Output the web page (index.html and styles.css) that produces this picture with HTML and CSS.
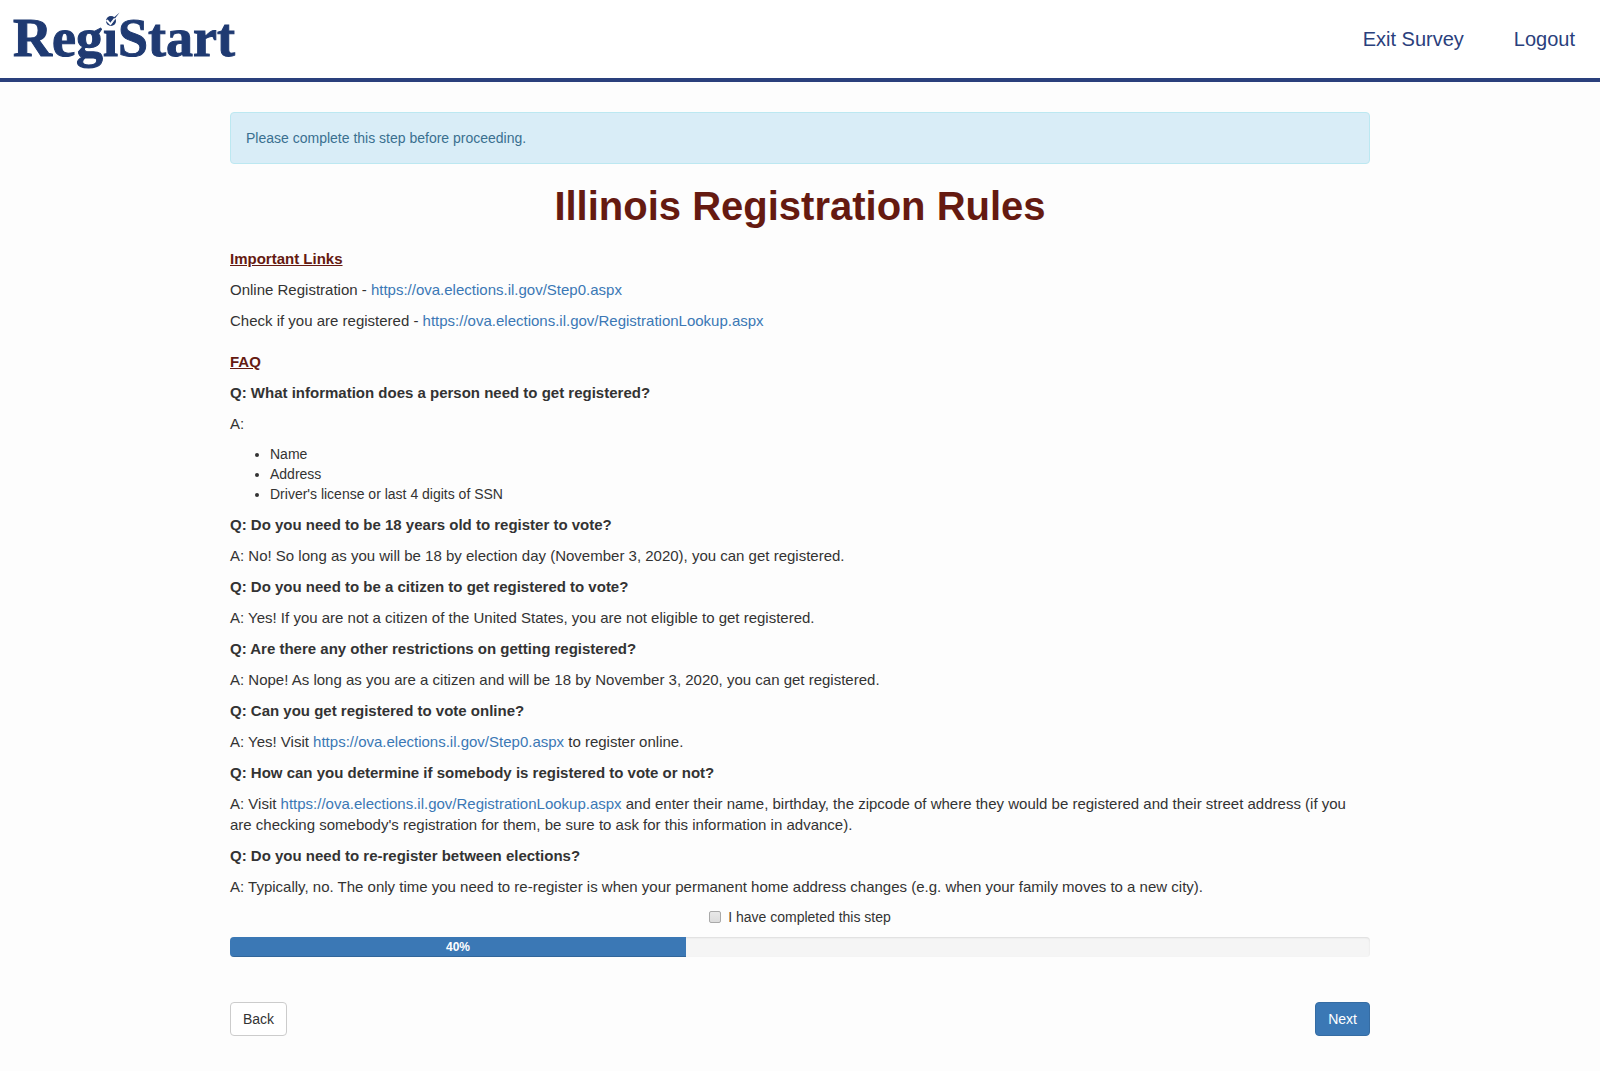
FILE: index.html
```html
<!DOCTYPE html>
<html lang="en">
<head>
<meta charset="utf-8">
<meta name="viewport" content="width=device-width, initial-scale=1">
<title>RegiStart - Illinois Registration Rules</title>
<link rel="stylesheet" href="styles.css">
</head>
<body>
<header class="site-header">
  <a class="logo" href="#">Reg<span class="logo-i">i<svg class="logo-mark" viewBox="0 0 18 18" aria-hidden="true">
    <rect x="2" y="2" width="11" height="14" fill="#fff"/>
    <circle cx="8" cy="9" r="5" fill="#1f3a72"/>
    <path d="M3 8.6 L4.6 7.4 L7.4 10.4 L12 4.4 L14 5 L7.6 13.6 Z" fill="#fff"/>
    <path d="M8.6 7.4 L16.6 .6 L11.4 7.2 L9.8 9.2 L7.6 11.4 L6.6 9.6 Z" fill="#1f3a72"/>
    <path d="M3.6 8.4 L7.2 12 L11.6 6.4" fill="none" stroke="#fff" stroke-width="1.4"/>
  </svg></span>Start</a>
  <nav class="site-nav">
    <a href="#">Exit Survey</a>
    <a href="#">Logout</a>
  </nav>
</header>
<main class="container">
  <div class="alert" role="alert">Please complete this step before proceeding.</div>
  <h1>Illinois Registration Rules</h1>

  <section class="section">
    <h2>Important Links</h2>
    <p>Online Registration - <a href="https://ova.elections.il.gov/Step0.aspx">https://ova.elections.il.gov/Step0.aspx</a></p>
    <p>Check if you are registered - <a href="https://ova.elections.il.gov/RegistrationLookup.aspx">https://ova.elections.il.gov/RegistrationLookup.aspx</a></p>
  </section>

  <section class="section">
    <h2>FAQ</h2>
    <h3>Q: What information does a person need to get registered?</h3>
    <p>A:</p>
    <ul>
      <li>Name</li>
      <li>Address</li>
      <li>Driver's license or last 4 digits of SSN</li>
    </ul>
    <h3>Q: Do you need to be 18 years old to register to vote?</h3>
    <p>A: No! So long as you will be 18 by election day (November 3, 2020), you can get registered.</p>
    <h3>Q: Do you need to be a citizen to get registered to vote?</h3>
    <p>A: Yes! If you are not a citizen of the United States, you are not eligible to get registered.</p>
    <h3>Q: Are there any other restrictions on getting registered?</h3>
    <p>A: Nope! As long as you are a citizen and will be 18 by November 3, 2020, you can get registered.</p>
    <h3>Q: Can you get registered to vote online?</h3>
    <p>A: Yes! Visit <a href="https://ova.elections.il.gov/Step0.aspx">https://ova.elections.il.gov/Step0.aspx</a> to register online.</p>
    <h3>Q: How can you determine if somebody is registered to vote or not?</h3>
    <p>A: Visit <a href="https://ova.elections.il.gov/RegistrationLookup.aspx">https://ova.elections.il.gov/RegistrationLookup.aspx</a> and enter their name, birthday, the zipcode of where they would be registered and their street address (if you are checking somebody's registration for them, be sure to ask for this information in advance).</p>
    <h3>Q: Do you need to re-register between elections?</h3>
    <p>A: Typically, no. The only time you need to re-register is when your permanent home address changes (e.g. when your family moves to a new city).</p>
  </section>

  <form class="step-form">
    <label class="complete" for="completed"><input type="checkbox" id="completed">I have completed this step</label>
    <div class="progress" role="progressbar" aria-label="Progress" aria-valuenow="40" aria-valuemin="0" aria-valuemax="100">
      <div class="progress-bar" style="width: 40%">40%</div>
    </div>
    <div class="actions">
      <button class="btn" type="button">Back</button>
      <button class="btn btn-primary" type="button">Next</button>
    </div>
  </form>
</main>
</body>
</html>
```

FILE: styles.css
```css
* {
  box-sizing: border-box;
}

body {
  margin: 0;
  background: #fdfdfd;
  color: #333;
  font: 14px/20px "Liberation Sans", Arial, sans-serif;
}

a {
  color: #3b78b5;
  text-decoration: none;
}

.site-header {
  display: flex;
  justify-content: space-between;
  align-items: flex-start;
  padding: 0 25px 2px 13px;
  background: #fff;
  border-bottom: 4px solid #2a407c;
}

.logo {
  color: #1f3a72;
  font: bold 54px/76px "Liberation Serif", "Times New Roman", serif;
  -webkit-text-stroke: 1px #1f3a72;
}

.logo-i {
  position: relative;
}

.logo-mark {
  position: absolute;
  left: 0;
  top: 4px;
  width: 18px;
  height: 18px;
}

.site-nav {
  display: flex;
  gap: 50px;
  padding-top: 25px;
}

.site-nav a {
  color: #2a407c;
  font-size: 20px;
  line-height: 28px;
}

.container {
  max-width: 1170px;
  margin: 0 auto;
  padding: 30px 15px;
}

.alert {
  margin-bottom: 20px;
  padding: 15px;
  border: 1px solid #bce8f1;
  border-radius: 4px;
  background: #d9edf7;
  color: #3a7090;
}

h1 {
  margin: 0 0 20px;
  color: #651a11;
  font-size: 40px;
  line-height: 44px;
  text-align: center;
}

.section {
  margin-bottom: 20px;
  font-size: 15px;
  line-height: 21px;
}

.section:last-of-type {
  margin-bottom: 10px;
}

h2,
h3,
p {
  margin: 0 0 10px;
  font-size: 15px;
  line-height: 21px;
}

p:last-child {
  margin-bottom: 0;
}

h2 {
  color: #651a11;
  text-decoration: underline;
}

ul {
  margin: 0 0 10px;
  padding-left: 40px;
  font-size: 14px;
  line-height: 20px;
}

.complete {
  display: flex;
  justify-content: center;
  align-items: center;
  gap: 7px;
  margin-bottom: 10px;
}

.complete input {
  appearance: none;
  width: 12px;
  height: 12px;
  margin: 0;
  border: 1px solid #a9a9a9;
  border-radius: 2px;
  background: linear-gradient(#e8e8e8, #dcdcdc);
}

.complete input:checked {
  background: #3b78b5;
}

.progress {
  height: 20px;
  margin-bottom: 45px;
  overflow: hidden;
  border-radius: 4px;
  background: #f5f5f5;
  box-shadow: inset 0 1px 2px rgba(0, 0, 0, .1);
}

.progress-bar {
  height: 100%;
  background: #3b78b5;
  box-shadow: inset 0 -1px 0 rgba(0, 0, 0, .15);
  color: #fff;
  font-size: 12px;
  font-weight: bold;
  text-align: center;
}

.actions {
  display: flex;
  justify-content: space-between;
}

.btn {
  padding: 6px 12px;
  border: 1px solid #ccc;
  border-radius: 4px;
  background: #fff;
  color: #333;
  font: inherit;
}

.btn-primary {
  border-color: #356ca3;
  background: #3b78b5;
  color: #fff;
}
```
